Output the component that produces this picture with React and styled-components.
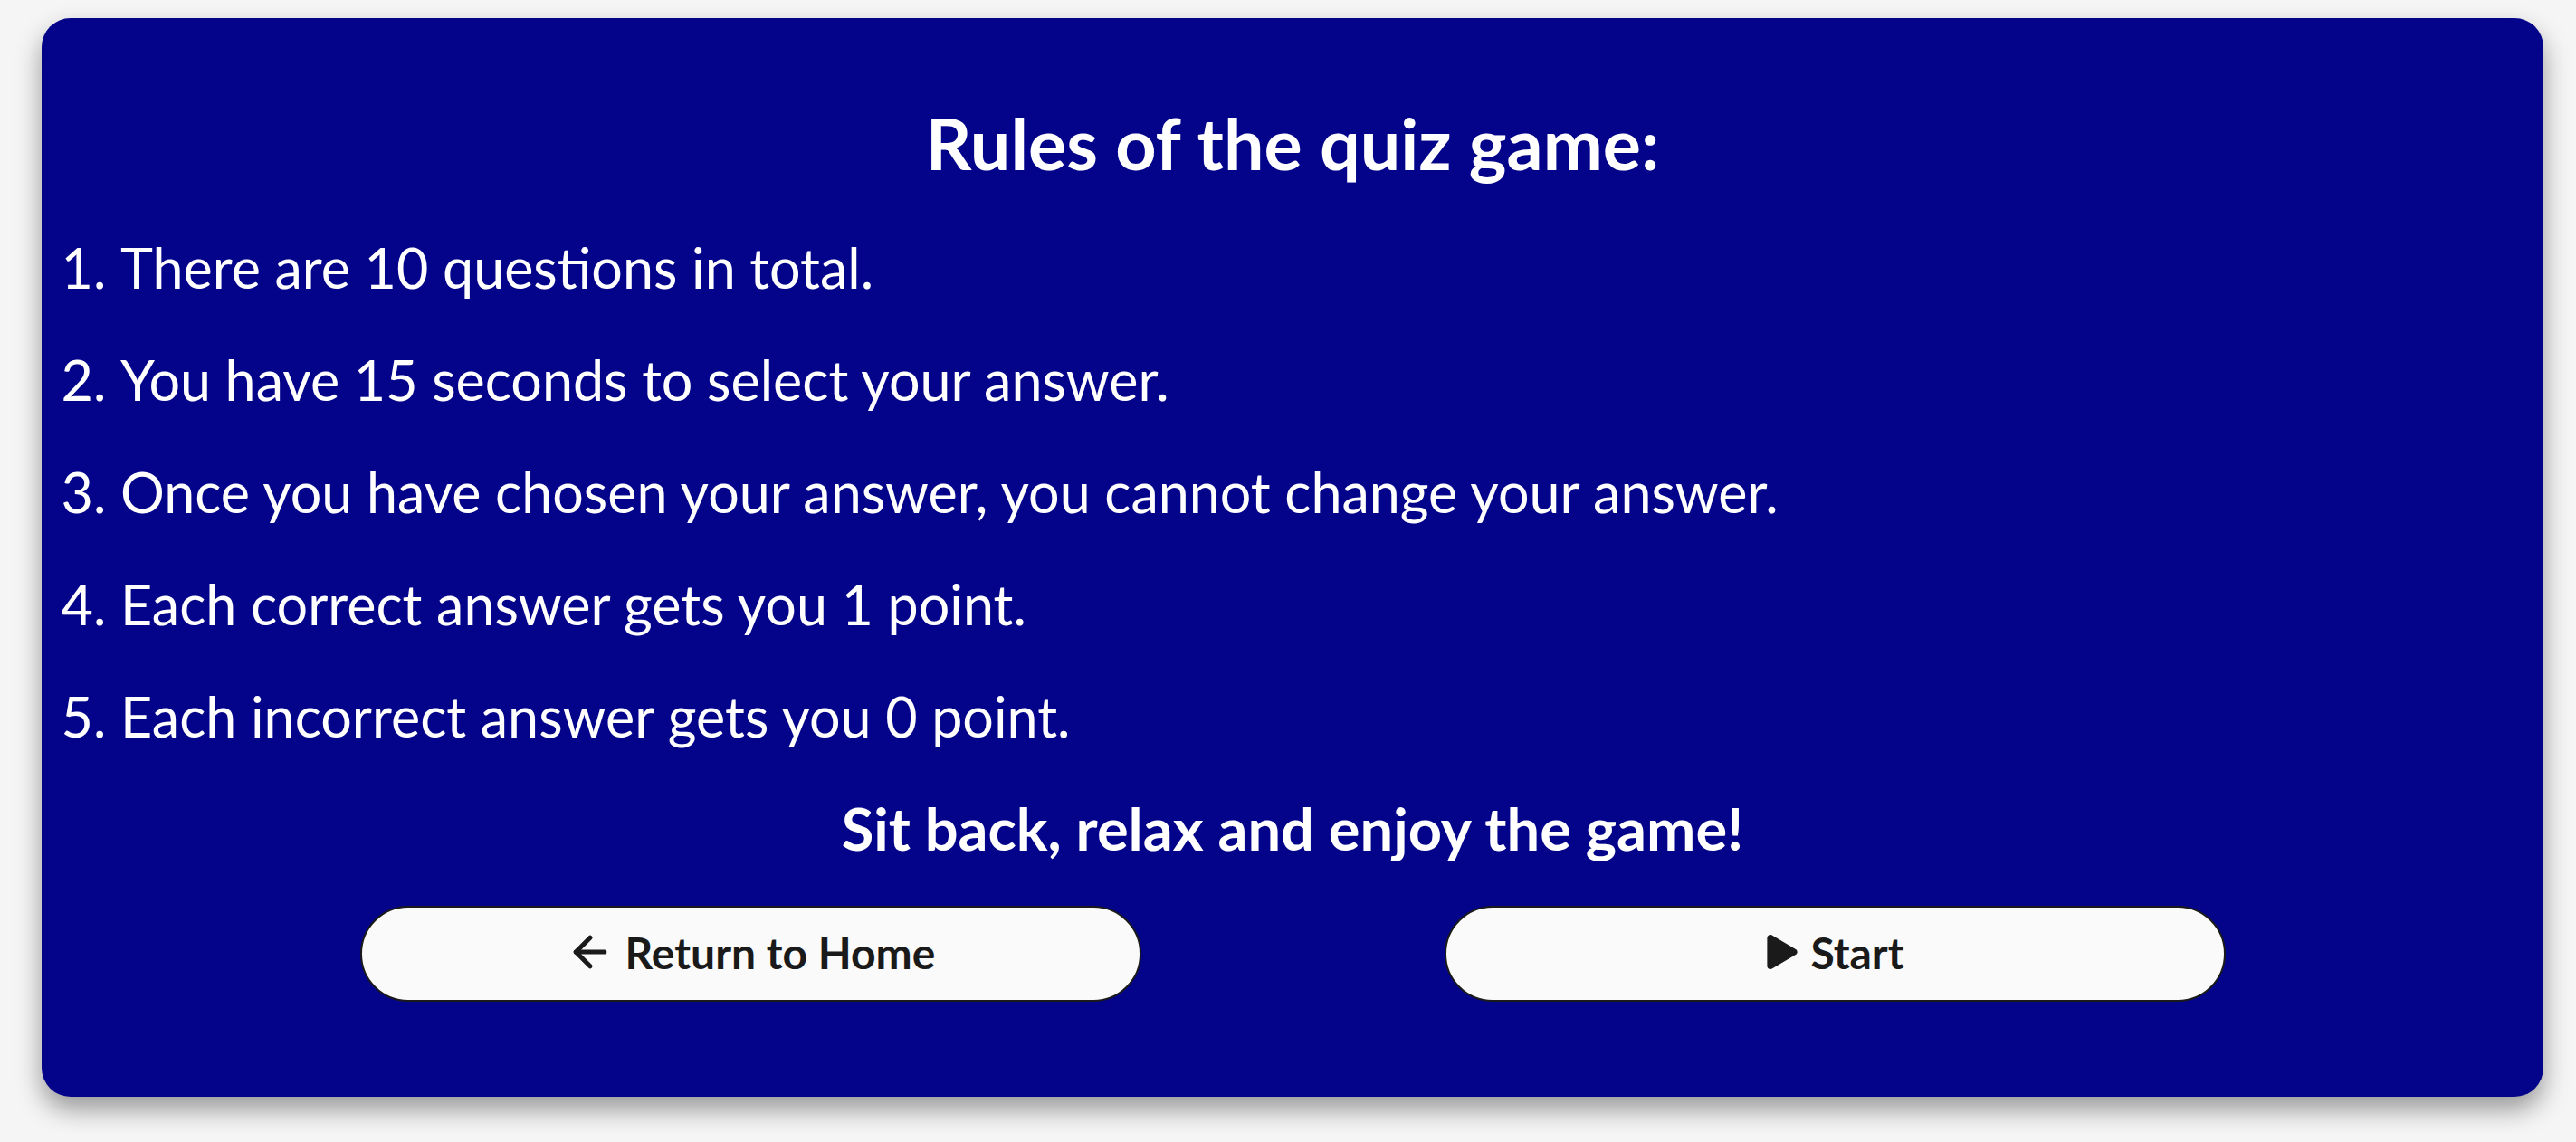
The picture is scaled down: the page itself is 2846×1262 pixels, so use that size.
import React from 'react';
import styled, {createGlobalStyle} from 'styled-components';
import {ArrowLeft} from 'lucide-react';
import {FaPlay} from 'react-icons/fa';

const rules = [
  'There are 10 questions in total.',
  'You have 15 seconds to select your answer.',
  'Once you have chosen your answer, you cannot change your answer.',
  'Each correct answer gets you 1 point.',
  'Each incorrect answer gets you 0 point.',
];

const App = () => {
  return (
    <Page>
      <GlobalStyle/>
      <Card>
        <Title>Rules of the quiz game:</Title>
        <RuleList>
          {rules.map((rule) => (
            <Rule key={rule}>{rule}</Rule>
          ))}
        </RuleList>
        <Outro>Sit back, relax and enjoy the game!</Outro>
        <ButtonRow>
          <PillButton type="button">
            <ArrowLeft size={54} strokeWidth={2.3}/>
            Return to Home
          </PillButton>
          <PillButton type="button">
            <FaPlay size={38}/>
            Start
          </PillButton>
        </ButtonRow>
      </Card>
    </Page>
  );
};

const GlobalStyle = createGlobalStyle`
  body {
    margin: 0;
    background: #f5f5f5;
    font-family: "Lato", "Open Sans", sans-serif;
  }
`;

const Page = styled.div`
  padding: 20px 36px 40px 46px;
`;

const Card = styled.div`
  background: #04048a;
  color: #ffffff;
  border-radius: 32px;
  padding: 95px 48px 105px;
  box-shadow: 0 14px 28px rgba(0, 0, 0, 0.38);
`;

const Title = styled.h1`
  margin: 0;
  text-align: center;
  font-size: 79px;
  font-weight: 700;
  line-height: 85px;
`;

const RuleList = styled.ol`
  margin: 34px 0 0;
  padding-left: 39px;
`;

const Rule = styled.li`
  font-size: 61px;
  line-height: 124px;
`;

const Outro = styled.p`
  margin: 27px 0 0;
  text-align: center;
  font-size: 65px;
  font-weight: 700;
  line-height: 68px;
`;

const ButtonRow = styled.div`
  display: flex;
  justify-content: center;
  gap: 335px;
  margin-top: 52px;
`;

const PillButton = styled.button`
  width: 863px;
  height: 106px;
  display: flex;
  align-items: center;
  justify-content: center;
  gap: 12px;
  padding: 0 0 4px;
  background: #fafafa;
  color: #1a1a1a;
  border: 2px solid #1a1a1a;
  border-radius: 60px;
  font-family: "Lato", "Open Sans", sans-serif;
  font-size: 48px;
  font-weight: 700;
  cursor: pointer;
`;

export default App;
